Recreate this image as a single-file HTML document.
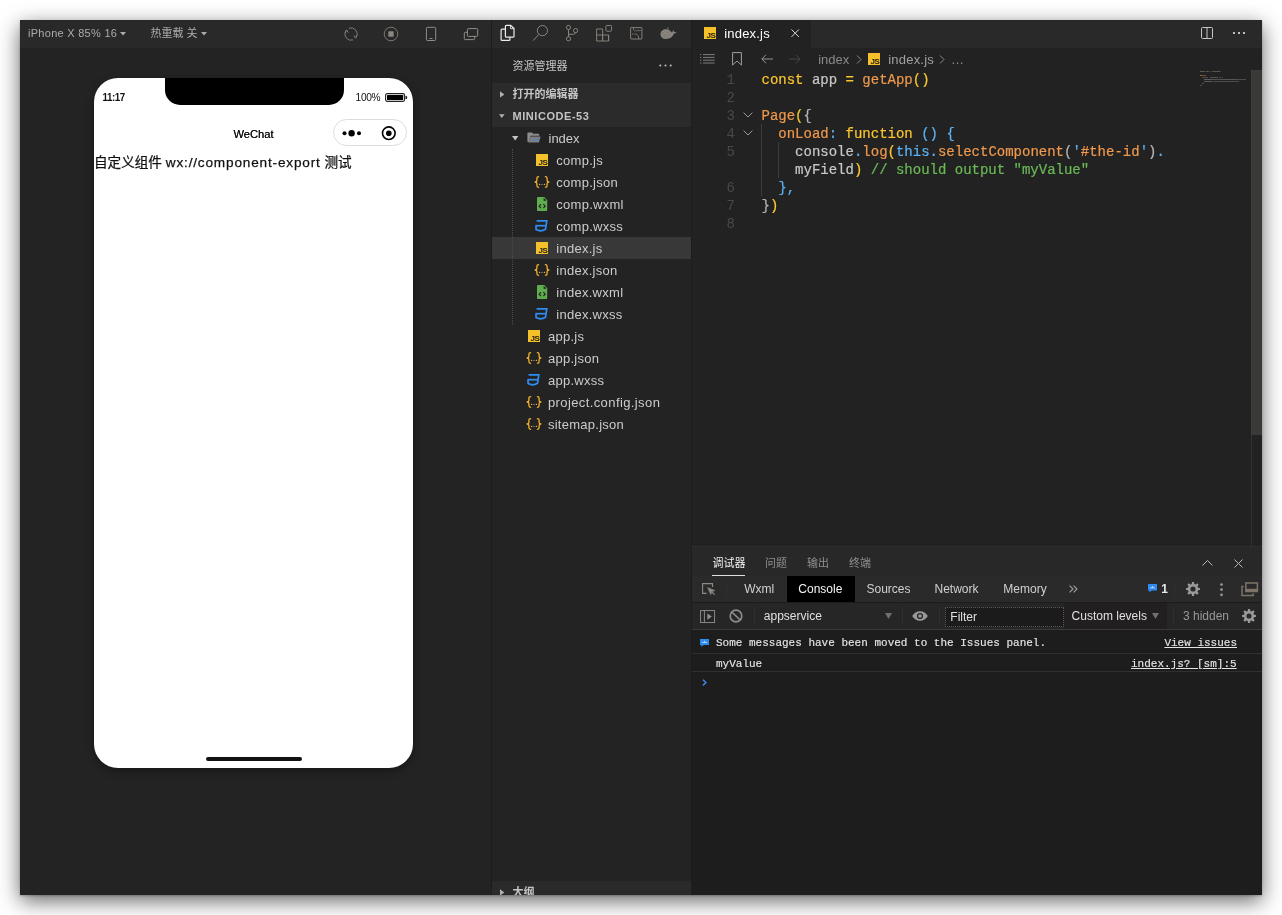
<!DOCTYPE html>
<html lang="zh">
<head>
<meta charset="utf-8">
<title>index.js</title>
<style>
html,body{margin:0;padding:0;background:#fff;}
body{width:1282px;height:915px;position:relative;overflow:hidden;font-family:"Liberation Sans","Noto Sans CJK SC",sans-serif;}
#win{position:absolute;left:20px;top:20px;width:1242px;height:875px;background:#232323;overflow:hidden;}
#shadow{position:absolute;left:20px;top:20px;width:1242px;height:875px;box-shadow:0 6px 20px rgba(0,0,0,.6),0 1px 2px rgba(0,0,0,.22);}
#pg{will-change:transform;position:absolute;left:-20px;top:-20px;width:1282px;height:915px;}
.a{position:absolute;}
.t{position:absolute;white-space:nowrap;line-height:1;}
svg{position:absolute;overflow:visible;}
/* simulator */
#simbar{left:20px;top:20px;width:471px;height:28px;background:#292929;}
#simbody{left:20px;top:48px;width:471px;height:847px;background:#232323;}
#phone{left:94px;top:78px;width:319px;height:690px;background:#fff;border-radius:24px;box-shadow:0 3px 8px rgba(0,0,0,.35);overflow:hidden;}
#notch{left:164.5px;top:78px;width:179px;height:27px;background:#000;border-radius:0 0 15px 15px;}
/* sidebar */
#divider{left:491px;top:20px;width:1px;height:875px;background:#1d1d1d;}
#actbar{left:492px;top:20px;width:199px;height:28px;background:#292929;}
#side{left:492px;top:48px;width:199px;height:847px;background:#232323;}
.sec{left:492px;width:199px;height:22px;background:#2b2b2b;}
.row{left:492px;width:199px;height:22px;}
.fn{font-size:13px;color:#cccccc;}
/* editor */
#divider2{left:691px;top:20px;width:1px;height:875px;background:#1d1d1d;}
#tabbar{left:692px;top:20px;width:570px;height:28px;background:#292929;}
#tab{left:692px;top:20px;width:119px;height:28px;background:#222222;}
#editor{left:692px;top:48px;width:570px;height:498px;background:#222222;}
.code{-webkit-text-stroke:.2px currentColor;font-family:"Liberation Mono",monospace;font-size:14px;left:761.5px;height:18px;line-height:18px;white-space:pre;position:absolute;color:#c8c8c8;}
.ln{font-family:"Liberation Mono",monospace;font-size:14px;height:18px;line-height:18px;position:absolute;left:701px;width:34px;text-align:right;color:#484848;}
.y{color:#fbc72c}.o{color:#f0994c}.b{color:#5db1f2}.g{color:#b4b4b4}.gr{color:#6abb55}
/* panel */
#panelhead{left:692px;top:546px;width:570px;height:30px;background:#282828;border-top:1px dotted #343434;box-sizing:border-box;}
#dtabs{left:692px;top:576px;width:570px;height:26px;background:#2a2a2a;}
#ctool{left:692px;top:602px;width:570px;height:28px;background:#262626;border-top:1px solid #1c1c1c;border-bottom:1px solid #3a3a3a;box-sizing:border-box;}
#console{left:692px;top:630px;width:570px;height:265px;background:#1d1d1d;}
.dt{font-size:12px;color:#d0d0d0;}
.cm{font-family:"Liberation Mono",monospace;font-size:11px;color:#e4e4e4;-webkit-text-stroke:.15px #e4e4e4;}
</style>
</head>
<body>
<div id="shadow"></div>
<div id="win"><div id="pg">

<!-- ============ SIMULATOR ============ -->
<div class="a" id="simbar"></div>
<div class="a" id="simbody"></div>
<div class="t" style="left:28px;top:27.5px;font-size:11px;letter-spacing:.28px;color:#ababab;">iPhone X 85% 16</div>
<svg style="left:120px;top:31.7px" width="6" height="3.5" viewBox="0 0 7 4"><path d="M0 0h7L3.5 4z" fill="#ababab"/></svg>
<div class="t" style="left:150.5px;top:27.5px;font-size:11px;color:#ababab;">热重载 关</div>
<svg style="left:201.4px;top:31.7px" width="6" height="3.5" viewBox="0 0 7 4"><path d="M0 0h7L3.5 4z" fill="#ababab"/></svg>
<!-- refresh -->
<svg style="left:341px;top:24px" width="20" height="20" viewBox="0 0 20 20" fill="none" stroke="#8a857c" stroke-width=".9"><path d="M7.9 4.2A6.2 6.2 0 0 1 15.2 13.4"/><path d="M13 11.5l1.5 2.7 1.5-3"/><path d="M12.2 15.9A6.2 6.2 0 0 1 4.9 6.7"/><path d="M7.1 8.6L5.6 5.9 4.1 8.9"/></svg>
<!-- stop -->
<svg style="left:383px;top:25.7px" width="16" height="16" viewBox="0 0 16 16"><circle cx="8" cy="8" r="6.8" fill="none" stroke="#857f75" stroke-width=".9"/><rect x="5.3" y="5.3" width="5.4" height="5.4" rx=".7" fill="#8a8680"/></svg>
<!-- phone -->
<svg style="left:423px;top:26px" width="16" height="16" viewBox="0 0 16 16" fill="none" stroke="#9a9894" stroke-width=".9"><rect x="3.4" y="1.3" width="9.3" height="13.2" rx="1.3"/><path d="M6.5 12.5h3"/></svg>
<!-- windows -->
<svg style="left:463px;top:26px" width="16" height="16" viewBox="0 0 16 16" fill="none" stroke="#9a9894" stroke-width=".9"><rect x="4.4" y="2.6" width="10.3" height="7.8" rx="1"/><path d="M4.4 6.3H2.3a1 1 0 0 0-1 1v5.3a1 1 0 0 0 1 1h8.4a1 1 0 0 0 1-1v-2.2"/></svg>

<div class="a" id="phone"></div>
<div class="a" id="notch"></div>
<div class="t" style="left:102.5px;top:92.5px;font-size:9.8px;font-weight:bold;letter-spacing:-.45px;color:#111;transform:scaleY(1.17);transform-origin:50% 85%;">11:17</div>
<div class="t" style="left:355.6px;top:92.6px;font-size:10.2px;letter-spacing:-.38px;color:#111;">100%</div>
<svg style="left:384.5px;top:93px" width="23" height="9" viewBox="0 0 23 9"><rect x=".6" y=".6" width="19" height="7.8" rx="1.6" fill="none" stroke="#222" stroke-width="1.1"/><rect x="2" y="2" width="16.2" height="5" rx=".6" fill="#000"/><path d="M20.5 2.9h.6a1.1 1.1 0 0 1 1.1 1.1v1a1.1 1.1 0 0 1-1.1 1.1h-.6z" fill="#222"/></svg>
<div class="t" style="left:94px;width:319px;text-align:center;top:128.8px;font-size:11.2px;color:#111;text-shadow:0 0 .2px #111;">WeChat</div>
<div class="a" style="left:333px;top:118.5px;width:74px;height:27px;border:1px solid #dcdcdc;border-radius:14px;box-sizing:border-box;"></div>
<svg style="left:333px;top:118.5px" width="74" height="27" viewBox="0 0 74 27"><circle cx="11.5" cy="14.2" r="2" fill="#000"/><circle cx="18.6" cy="14.2" r="3.2" fill="#000"/><circle cx="26" cy="14.2" r="2" fill="#000"/><circle cx="55.8" cy="14.2" r="6.3" fill="none" stroke="#000" stroke-width="1.6"/><circle cx="55.8" cy="14.2" r="2.8" fill="#000"/></svg>
<div class="t" id="bodytxt" style="left:94px;top:156px;font-size:13.6px;color:#111;-webkit-text-stroke:.25px #111;">自定义组件 <span style="letter-spacing:.83px">wx://component-export</span> 测试</div>
<div class="a" style="left:206px;top:756.5px;width:95.5px;height:4.4px;border-radius:2.2px;background:#111;"></div>


<!-- ============ SIDEBAR ============ -->
<div class="a" id="divider"></div>
<div class="a" id="actbar"></div>
<div class="a" id="side"></div>
<!-- files icon (active) -->
<svg style="left:498.8px;top:24.3px" width="16" height="18" viewBox="0 0 16 18" fill="none" stroke="#ececec" stroke-width="1.2" stroke-linejoin="round"><path d="M6.4 12.2V2.2a.9.9 0 0 1 .9-.9h4.5l3.2 3.2v7.7a.9.9 0 0 1-.9.9H7.3a.9.9 0 0 1-.9-.9z"/><path d="M11.6 1.5v3.2h3.2" stroke-width=".9"/><path d="M6.2 5.2H3a.9.9 0 0 0-.9.9v9.4a.9.9 0 0 0 .9.9h7a.9.9 0 0 0 .9-.9v-2.2"/></svg>
<!-- search -->
<svg style="left:532px;top:24px" width="18" height="18" viewBox="0 0 18 18" fill="none" stroke="#8a857c" stroke-width="1"><circle cx="10.4" cy="6.6" r="5.1"/><path d="M6.9 10.4L1.2 16.6"/></svg>
<!-- git -->
<svg style="left:564px;top:24px" width="16" height="18" viewBox="0 0 16 18" fill="none" stroke="#8a857c" stroke-width="1"><circle cx="4.5" cy="3.5" r="2.1"/><circle cx="4.5" cy="14.8" r="2.1"/><circle cx="11.6" cy="6.6" r="2.1"/><path d="M4.5 5.6v7.1M4.5 10.3h3.6c2.2 0 3.5-.6 3.5-1.6"/></svg>
<!-- extensions -->
<svg style="left:596px;top:24px" width="17" height="18" viewBox="0 0 17 18" fill="none" stroke="#8a857c" stroke-width=".95"><path d="M.6 5h6v12H.6zM.6 11h12v6H6.6v-6" /><path d="M12.6 11v6"/><rect x="9.9" y="1.5" width="5.6" height="5.7" rx=".7"/></svg>
<!-- layout/terminal-like -->
<svg style="left:630px;top:26.8px" width="13" height="13" viewBox="0 0 13 13" fill="none" stroke="#8a857c" stroke-width=".95"><rect x=".6" y=".6" width="11.3" height="11.4" rx=".5"/><path d="M3.5.6v2.5l1 .9.9-.8.9.8.9-.8.9.8.9-.8.9.8.9-.8" stroke-width=".7"/><path d="M2 7h1M3.4 7h1M4.8 7h1.2l2.6 2v3" stroke-width=".8"/></svg>
<!-- docker whale -->
<svg style="left:659.5px;top:27px" width="17" height="13" viewBox="0 0 17 13"><path d="M.5 7.2C.5 4.2 2.8 2.2 6 2.2c2.7 0 4.7 1.3 5.8 3.4.6-.4 1-1.2 1-2.4 1 .6 1.4 1.2 1.6 2 .6-.3 1.3-.3 2 .1-.5.9-1.4 1.3-2.6 1.3C13 9.8 10 12 6.2 12 2.8 12 .5 10.2.5 7.2z" fill="#8a857c"/><path d="M7.8 2.4V.8M7.8.9h1" stroke="#8a857c" stroke-width=".8" fill="none"/><g fill="#5a564f"><circle cx="3" cy="6" r=".45"/><circle cx="5.2" cy="4.6" r=".45"/><circle cx="7.6" cy="5.8" r=".45"/><circle cx="4.4" cy="8" r=".45"/><circle cx="6.8" cy="8.6" r=".45"/><circle cx="9.4" cy="7.4" r=".45"/><circle cx="3" cy="9.6" r=".45"/><circle cx="8.8" cy="10" r=".45"/><circle cx="5.6" cy="10.4" r=".45"/><circle cx="9.6" cy="4.8" r=".45"/></g></svg>

<div class="t" style="left:512.5px;top:60.5px;font-size:11px;color:#c4c4c4;">资源管理器</div>
<svg style="left:659px;top:64px" width="13" height="3" viewBox="0 0 13 3" fill="#c4c4c4"><circle cx="1.3" cy="1.5" r="1"/><circle cx="6.5" cy="1.5" r="1"/><circle cx="11.7" cy="1.5" r="1"/></svg>
<div class="a sec" style="top:83px;"></div>
<div class="a sec" style="top:105px;"></div>
<svg style="left:500px;top:90.8px" width="4.4" height="6.8" viewBox="0 0 5 7"><path d="M0 0l5 3.5L0 7z" fill="#b0b0b0"/></svg>
<div class="t" style="left:512.5px;top:89px;font-size:11px;font-weight:bold;color:#c4c4c4;">打开的编辑器</div>
<svg style="left:499.4px;top:113.8px" width="5.6" height="4.2" viewBox="0 0 7 4.6"><path d="M0 0h7L3.5 4.6z" fill="#b0b0b0"/></svg>
<div class="t" style="left:512.5px;top:110.5px;font-size:11px;font-weight:bold;letter-spacing:.55px;color:#c4c4c4;">MINICODE-53</div>
<div class="a" style="left:492px;top:237px;width:199px;height:22px;background:#383838;"></div>
<div class="a" style="left:512px;top:149px;width:0;height:176px;border-left:1px dotted #4c4c4c;"></div>
<svg style="left:512px;top:135.8px" width="6.4" height="4.4" viewBox="0 0 6.4 4.4"><path d="M0 0h6.4L3.2 4.4z" fill="#c4c4c4"/></svg>
<svg style="left:527px;top:132.1px" width="14" height="11" viewBox="0 0 14 11"><path d="M.4 9.6V1.2a.8.8 0 0 1 .8-.8h3.8l1.2 1.4h5.2a.8.8 0 0 1 .8.8v1.2H3.4L1.6 10.2z" fill="#8e8e8e"/><path d="M3.2 4.4h10.4L12 10.4H1.4z" fill="#7f7f7f"/><g fill="#2f8cf3"><circle cx="8.4" cy="6.4" r=".7"/><circle cx="11.4" cy="6.4" r=".7"/><circle cx="4.4" cy="8.6" r=".7"/><circle cx="7.4" cy="8.6" r=".7"/><circle cx="10.4" cy="8.6" r=".7"/></g></svg>
<div class="t fn" style="left:548.5px;top:132px;letter-spacing:0;">index</div>
<svg style="left:536px;top:154px" width="12" height="12" viewBox="0 0 12 12"><rect width="12" height="12" fill="#f4c12b"/><text x="11.4" y="10.8" text-anchor="end" font-family="Liberation Sans, sans-serif" font-weight="bold" font-size="8" fill="#2a2110" letter-spacing="-.4">JS</text></svg>
<div class="t fn" style="left:556.3px;top:154px;letter-spacing:.27px;">comp.js</div>
<svg style="left:534px;top:175.8px" width="16" height="12" viewBox="0 0 16 12" fill="none" stroke="#f3b32d" stroke-width="1.3" stroke-linecap="round" stroke-linejoin="round"><path d="M4.6.7C3.2.7 2.9 1.3 2.9 2.4v2c0 .9-.6 1.4-1.8 1.6C2.3 6.2 2.9 6.7 2.9 7.6v2c0 1.1.3 1.7 1.7 1.7"/><path d="M11.4.7c1.4 0 1.7.6 1.7 1.7v2c0 .9.6 1.4 1.8 1.6-1.2.2-1.8.7-1.8 1.6v2c0 1.1-.3 1.7-1.7 1.7"/><g stroke="none"><circle cx="5.6" cy="8.4" r=".7" fill="#f3b32d"/><circle cx="8" cy="8.4" r=".7" fill="#8c8c8c"/><circle cx="10.4" cy="8.4" r=".7" fill="#f3b32d"/></g></svg>
<div class="t fn" style="left:556.3px;top:176px;letter-spacing:.27px;">comp.json</div>
<svg style="left:537px;top:197px" width="11" height="14" viewBox="0 0 11 14"><path d="M1 0h6.2L10.2 3.2V13a1 1 0 0 1-1 1H1a1 1 0 0 1-1-1V1a1 1 0 0 1 1-1z" fill="#5fae4e"/><path d="M6.6.8v3h3z" fill="#232323"/><path d="M4 7.2L2.2 9.2 4 11.2M6.4 7.2l1.8 2-1.8 2" fill="none" stroke="#232323" stroke-width="1.2"/></svg>
<div class="t fn" style="left:556.3px;top:198px;letter-spacing:.27px;">comp.wxml</div>
<svg style="left:535.4px;top:220px" width="13" height="12" viewBox="0 0 13 12" fill="none" stroke="#2f8cf3" stroke-width="1.7"><path d="M1.6 .9h10.2l-1.3 8.3Q6 12.2 1.1 9.6L1 6"/><path d="M.4 5.7h10.4"/></svg>
<div class="t fn" style="left:556.3px;top:220px;letter-spacing:.27px;">comp.wxss</div>
<svg style="left:536px;top:242px" width="12" height="12" viewBox="0 0 12 12"><rect width="12" height="12" fill="#f4c12b"/><text x="11.4" y="10.8" text-anchor="end" font-family="Liberation Sans, sans-serif" font-weight="bold" font-size="8" fill="#2a2110" letter-spacing="-.4">JS</text></svg>
<div class="t fn" style="left:556.3px;top:242px;letter-spacing:.27px;">index.js</div>
<svg style="left:534px;top:263.8px" width="16" height="12" viewBox="0 0 16 12" fill="none" stroke="#f3b32d" stroke-width="1.3" stroke-linecap="round" stroke-linejoin="round"><path d="M4.6.7C3.2.7 2.9 1.3 2.9 2.4v2c0 .9-.6 1.4-1.8 1.6C2.3 6.2 2.9 6.7 2.9 7.6v2c0 1.1.3 1.7 1.7 1.7"/><path d="M11.4.7c1.4 0 1.7.6 1.7 1.7v2c0 .9.6 1.4 1.8 1.6-1.2.2-1.8.7-1.8 1.6v2c0 1.1-.3 1.7-1.7 1.7"/><g stroke="none"><circle cx="5.6" cy="8.4" r=".7" fill="#f3b32d"/><circle cx="8" cy="8.4" r=".7" fill="#8c8c8c"/><circle cx="10.4" cy="8.4" r=".7" fill="#f3b32d"/></g></svg>
<div class="t fn" style="left:556.3px;top:264px;letter-spacing:.27px;">index.json</div>
<svg style="left:537px;top:285px" width="11" height="14" viewBox="0 0 11 14"><path d="M1 0h6.2L10.2 3.2V13a1 1 0 0 1-1 1H1a1 1 0 0 1-1-1V1a1 1 0 0 1 1-1z" fill="#5fae4e"/><path d="M6.6.8v3h3z" fill="#232323"/><path d="M4 7.2L2.2 9.2 4 11.2M6.4 7.2l1.8 2-1.8 2" fill="none" stroke="#232323" stroke-width="1.2"/></svg>
<div class="t fn" style="left:556.3px;top:286px;letter-spacing:.27px;">index.wxml</div>
<svg style="left:535.4px;top:308px" width="13" height="12" viewBox="0 0 13 12" fill="none" stroke="#2f8cf3" stroke-width="1.7"><path d="M1.6 .9h10.2l-1.3 8.3Q6 12.2 1.1 9.6L1 6"/><path d="M.4 5.7h10.4"/></svg>
<div class="t fn" style="left:556.3px;top:308px;letter-spacing:.27px;">index.wxss</div>
<svg style="left:528px;top:330px" width="12" height="12" viewBox="0 0 12 12"><rect width="12" height="12" fill="#f4c12b"/><text x="11.4" y="10.8" text-anchor="end" font-family="Liberation Sans, sans-serif" font-weight="bold" font-size="8" fill="#2a2110" letter-spacing="-.4">JS</text></svg>
<div class="t fn" style="left:547.9px;top:330px;letter-spacing:.27px;">app.js</div>
<svg style="left:526px;top:351.8px" width="16" height="12" viewBox="0 0 16 12" fill="none" stroke="#f3b32d" stroke-width="1.3" stroke-linecap="round" stroke-linejoin="round"><path d="M4.6.7C3.2.7 2.9 1.3 2.9 2.4v2c0 .9-.6 1.4-1.8 1.6C2.3 6.2 2.9 6.7 2.9 7.6v2c0 1.1.3 1.7 1.7 1.7"/><path d="M11.4.7c1.4 0 1.7.6 1.7 1.7v2c0 .9.6 1.4 1.8 1.6-1.2.2-1.8.7-1.8 1.6v2c0 1.1-.3 1.7-1.7 1.7"/><g stroke="none"><circle cx="5.6" cy="8.4" r=".7" fill="#f3b32d"/><circle cx="8" cy="8.4" r=".7" fill="#8c8c8c"/><circle cx="10.4" cy="8.4" r=".7" fill="#f3b32d"/></g></svg>
<div class="t fn" style="left:547.9px;top:352px;letter-spacing:.27px;">app.json</div>
<svg style="left:527.4px;top:374px" width="13" height="12" viewBox="0 0 13 12" fill="none" stroke="#2f8cf3" stroke-width="1.7"><path d="M1.6 .9h10.2l-1.3 8.3Q6 12.2 1.1 9.6L1 6"/><path d="M.4 5.7h10.4"/></svg>
<div class="t fn" style="left:547.9px;top:374px;letter-spacing:.27px;">app.wxss</div>
<svg style="left:526px;top:395.8px" width="16" height="12" viewBox="0 0 16 12" fill="none" stroke="#f3b32d" stroke-width="1.3" stroke-linecap="round" stroke-linejoin="round"><path d="M4.6.7C3.2.7 2.9 1.3 2.9 2.4v2c0 .9-.6 1.4-1.8 1.6C2.3 6.2 2.9 6.7 2.9 7.6v2c0 1.1.3 1.7 1.7 1.7"/><path d="M11.4.7c1.4 0 1.7.6 1.7 1.7v2c0 .9.6 1.4 1.8 1.6-1.2.2-1.8.7-1.8 1.6v2c0 1.1-.3 1.7-1.7 1.7"/><g stroke="none"><circle cx="5.6" cy="8.4" r=".7" fill="#f3b32d"/><circle cx="8" cy="8.4" r=".7" fill="#8c8c8c"/><circle cx="10.4" cy="8.4" r=".7" fill="#f3b32d"/></g></svg>
<div class="t fn" style="left:547.9px;top:396px;letter-spacing:.4px;">project.config.json</div>
<svg style="left:526px;top:417.8px" width="16" height="12" viewBox="0 0 16 12" fill="none" stroke="#f3b32d" stroke-width="1.3" stroke-linecap="round" stroke-linejoin="round"><path d="M4.6.7C3.2.7 2.9 1.3 2.9 2.4v2c0 .9-.6 1.4-1.8 1.6C2.3 6.2 2.9 6.7 2.9 7.6v2c0 1.1.3 1.7 1.7 1.7"/><path d="M11.4.7c1.4 0 1.7.6 1.7 1.7v2c0 .9.6 1.4 1.8 1.6-1.2.2-1.8.7-1.8 1.6v2c0 1.1-.3 1.7-1.7 1.7"/><g stroke="none"><circle cx="5.6" cy="8.4" r=".7" fill="#f3b32d"/><circle cx="8" cy="8.4" r=".7" fill="#8c8c8c"/><circle cx="10.4" cy="8.4" r=".7" fill="#f3b32d"/></g></svg>
<div class="t fn" style="left:547.9px;top:418px;letter-spacing:.27px;">sitemap.json</div>
<div class="a sec" style="top:881px;background:#2a2a2a;"></div>
<svg style="left:500px;top:888.5px" width="4.4" height="6.8" viewBox="0 0 5 7"><path d="M0 0l5 3.5L0 7z" fill="#b0b0b0"/></svg>
<div class="t" style="left:512.5px;top:886.5px;font-size:11px;font-weight:bold;color:#c4c4c4;">大纲</div>


<!-- ============ EDITOR ============ -->
<div class="a" id="divider2"></div>
<div class="a" id="tabbar"></div>
<div class="a" id="tab"></div>
<div class="a" id="editor"></div>
<!-- tab -->
<svg style="left:704px;top:27px" width="12" height="12" viewBox="0 0 12 12"><rect width="12" height="12" fill="#f4c12b"/><text x="11.4" y="10.8" text-anchor="end" font-family="Liberation Sans, sans-serif" font-weight="bold" font-size="8" fill="#2a2110" letter-spacing="-.4">JS</text></svg>
<div class="t" style="left:724.3px;top:27px;font-size:13px;letter-spacing:.18px;color:#ffffff;">index.js</div>
<svg style="left:791px;top:29px" width="8.4" height="8.4" viewBox="0 0 9 9" stroke="#dcdcdc" stroke-width="1.05" fill="none"><path d="M.5.5l8 8M8.5.5l-8 8"/></svg>
<!-- right actions -->
<svg style="left:1201px;top:27px" width="12" height="12" viewBox="0 0 12 12" fill="none" stroke="#c8c8c8" stroke-width="1"><rect x=".5" y=".5" width="11" height="11" rx="1"/><path d="M6 .5v11"/></svg>
<svg style="left:1233px;top:32px" width="13" height="2" viewBox="0 0 13 2" fill="#c0c0c0"><rect x="0" y="0" width="2" height="2"/><rect x="5" y="0" width="2" height="2"/><rect x="10" y="0" width="2" height="2"/></svg>
<!-- breadcrumb row -->
<svg style="left:700px;top:54.1px" width="15" height="10" viewBox="0 0 15 10" stroke="#8e8e8e" stroke-width=".85" fill="none"><path d="M0 .6h1.4M3 .6h11.6M0 3.4h1.4M3 3.4h11.6M0 6.2h1.4M3 6.2h11.6M0 9h1.4M3 9h11.6"/></svg>
<svg style="left:732px;top:52px" width="10" height="14" viewBox="0 0 10 14" stroke="#a0a0a0" stroke-width="1" fill="none"><path d="M.6.6h8.8v12.4L5 9 .6 13z"/></svg>
<svg style="left:761px;top:54px" width="12" height="10" viewBox="0 0 12 10" stroke="#9a9a9a" stroke-width=".95" fill="none"><path d="M12 5H1M5 .8L.8 5 5 9.2"/></svg>
<svg style="left:789px;top:54px" width="12" height="10" viewBox="0 0 12 10" stroke="#484848" stroke-width=".95" fill="none"><path d="M0 5h11M7 .8L11.2 5 7 9.2"/></svg>
<div class="t" style="left:818.2px;top:52.5px;font-size:13px;color:#8a8a8a;">index</div>
<svg style="left:856px;top:55px" width="6" height="9" viewBox="0 0 6 9" stroke="#8a8a8a" stroke-width="1" fill="none"><path d="M1 .5l4 4-4 4"/></svg>
<svg style="left:868px;top:53px" width="12" height="12" viewBox="0 0 12 12"><rect width="12" height="12" fill="#f4c12b"/><text x="11.4" y="10.8" text-anchor="end" font-family="Liberation Sans, sans-serif" font-weight="bold" font-size="8" fill="#2a2110" letter-spacing="-.4">JS</text></svg>
<div class="t" style="left:888.2px;top:52.5px;font-size:13px;letter-spacing:.22px;color:#a0a0a0;">index.js</div>
<svg style="left:939px;top:55px" width="6" height="9" viewBox="0 0 6 9" stroke="#8a8a8a" stroke-width="1" fill="none"><path d="M1 .5l4 4-4 4"/></svg>
<div class="t" style="left:951px;top:52.5px;font-size:13px;color:#8a8a8a;">…</div>

<div class="ln" style="top:71px">1</div>
<div class="ln" style="top:89px">2</div>
<div class="ln" style="top:107px">3</div>
<div class="ln" style="top:125px">4</div>
<div class="ln" style="top:143px">5</div>
<div class="ln" style="top:179px">6</div>
<div class="ln" style="top:197px">7</div>
<div class="ln" style="top:215px">8</div>
<svg style="left:743px;top:112px" width="10" height="6" viewBox="0 0 10 6" stroke="#979797" stroke-width="1" fill="none"><path d="M.6.6L5 5l4.4-4.4"/></svg>
<svg style="left:743px;top:130px" width="10" height="6" viewBox="0 0 10 6" stroke="#979797" stroke-width="1" fill="none"><path d="M.6.6L5 5l4.4-4.4"/></svg>
<div class="a" style="left:761px;top:124px;width:1px;height:72px;background:#3c3c3c;"></div>
<div class="a" style="left:778px;top:142px;width:1px;height:36px;background:#3c3c3c;"></div>
<div class="code" style="top:71px"><span class="y">const</span> app <span class="y">=</span> <span class="o">getApp</span><span class="y">()</span></div>
<div class="code" style="top:107px"><span class="o">Page</span><span class="y">(</span><span class="g">{</span></div>
<div class="code" style="top:125px">  <span class="o">onLoad</span><span class="b">:</span> <span class="y">function</span> <span class="b">()</span> <span class="b">{</span></div>
<div class="code" style="top:143px">    console<span class="b">.</span><span class="o">log</span><span class="y">(</span><span class="b">this.</span><span class="o">selectComponent</span><span class="g">(</span><span class="b">'</span><span class="o">#the-id</span><span class="b">'</span><span class="g">)</span><span class="b">.</span></div>
<div class="code" style="top:161px">    myField<span class="y">)</span> <span class="gr">// should output "myValue"</span></div>
<div class="code" style="top:179px">  <span class="b">},</span></div>
<div class="code" style="top:197px"><span class="g">}</span><span class="y">)</span></div>
<!-- minimap -->
<svg style="left:1200px;top:70px;opacity:.75" width="48" height="18" viewBox="0 0 48 18">
<rect x="0" y="1" width="5" height="1" fill="#6e6a5c"/><rect x="6" y="1" width="3" height="1" fill="#6a6a6a"/><rect x="10.5" y="1" width="1" height="1" fill="#6e6a5c"/><rect x="12.5" y="1" width="8" height="1" fill="#6e655a"/>
<rect x="0" y="5" width="2" height="1" fill="#c47a30"/><rect x="2" y="5" width="4" height="1" fill="#6a6560"/>
<rect x="2" y="7" width="6" height="1" fill="#5e5a54"/><rect x="10" y="7" width="8" height="1" fill="#66625a"/><rect x="19" y="7" width="2" height="1" fill="#4a5a6a"/><rect x="22" y="7" width="1" height="1" fill="#4a5a6a"/>
<rect x="4" y="9" width="7" height="1" fill="#707070"/><rect x="11" y="9" width="4" height="1" fill="#6a625a"/><rect x="15" y="9" width="5" height="1" fill="#55606c"/><rect x="20" y="9" width="15" height="1" fill="#6e665c"/><rect x="35" y="9" width="11" height="1" fill="#5e5a54"/>
<rect x="4" y="11" width="8" height="1" fill="#707070"/><rect x="13" y="11" width="26" height="1" fill="#565e52"/>
<rect x="2" y="13" width="2" height="1" fill="#55606c"/>
<rect x="0" y="15" width="2" height="1" fill="#5a5a5a"/>
</svg>
<!-- scrollbar -->
<div class="a" style="left:1251px;top:70px;width:11px;height:365px;background:#3a3a38;"></div>
<div class="a" style="left:1251px;top:70px;width:0;height:476px;border-left:1px dotted #3e3e3e;"></div>


<!-- ============ PANEL ============ -->
<div class="a" id="panelhead"></div>
<div class="a" id="dtabs"></div>
<div class="a" id="ctool"></div>
<div class="a" id="console"></div>
<!-- panel header tabs -->
<div class="t" style="left:712.5px;top:557.8px;font-size:11px;color:#f0f0f0;">调试器</div>
<div class="a" style="left:712px;top:574.5px;width:32.6px;height:1px;background:#e0e0e0;"></div>
<div class="t" style="left:765px;top:557.8px;font-size:11px;color:#8e8e8e;">问题</div>
<div class="t" style="left:807px;top:557.8px;font-size:11px;color:#8e8e8e;">输出</div>
<div class="t" style="left:849px;top:557.8px;font-size:11px;color:#8e8e8e;">终端</div>
<svg style="left:1201.5px;top:559.8px" width="11" height="6" viewBox="0 0 11 6" stroke="#b8b8b8" stroke-width="1" fill="none"><path d="M.5 5.5l5-5 5 5"/></svg>
<svg style="left:1234.3px;top:558.8px" width="9" height="9" viewBox="0 0 9 9" stroke="#b8b8b8" stroke-width="1" fill="none"><path d="M.5.5l8 8M8.5.5l-8 8"/></svg>
<!-- devtools tabs -->
<svg style="left:702px;top:583px" width="14" height="13" viewBox="0 0 14 13" fill="none" stroke="#8e8a84" stroke-width="1.1"><path d="M10.5 4V.6H.6v9.8h4"/><path d="M5.6 4.6l7.2 3-3 1 -1 3z" fill="#8e8a84" stroke-width=".6"/><path d="M9.6 8.6l3 3" stroke-width="1.3"/></svg>
<div class="a" style="left:726px;top:581px;width:1px;height:16px;background:#2f2f2f;"></div>
<div class="t dt" style="left:744.3px;top:583px;">Wxml</div>
<div class="a" style="left:787px;top:576px;width:68px;height:26px;background:#000;"></div>
<div class="t dt" style="left:798.3px;top:583px;color:#f4f4f4;">Console</div>
<div class="t dt" style="left:866.5px;top:583px;">Sources</div>
<div class="t dt" style="left:934.5px;top:583px;">Network</div>
<div class="t dt" style="left:1003.3px;top:583px;">Memory</div>
<svg style="left:1068.5px;top:584.5px" width="9" height="8" viewBox="0 0 9 8" stroke="#a0a0a0" stroke-width="1.1" fill="none"><path d="M.6.6L4 4 .6 7.4M4.6.6L8 4 4.6 7.4"/></svg>
<svg style="left:1148px;top:584px" width="9" height="9" viewBox="0 0 9 9"><path d="M0 0h9v6.4H3.8L1.4 8.6V6.4H0z" fill="#2d8af0"/><path d="M2 3.8h5M4.5 2v2" stroke="#bcd9fa" stroke-width=".9"/></svg>
<div class="t dt" style="left:1161.3px;top:583px;color:#e8e8e8;font-weight:bold;">1</div>
<div class="a" style="left:1174px;top:581px;width:1px;height:16px;background:#2f2f2f;"></div>
<svg style="left:1185.6px;top:582px" width="14" height="14" viewBox="0 0 14 14"><path d="M5.96 0.08L8.04 0.08L8.25 1.97L9.67 2.56L11.16 1.37L12.63 2.84L11.44 4.33L12.03 5.75L13.92 5.96L13.92 8.04L12.03 8.25L11.44 9.67L12.63 11.16L11.16 12.63L9.67 11.44L8.25 12.03L8.04 13.92L5.96 13.92L5.75 12.03L4.33 11.44L2.84 12.63L1.37 11.16L2.56 9.67L1.97 8.25L0.08 8.04L0.08 5.96L1.97 5.75L2.56 4.33L1.37 2.84L2.84 1.37L4.33 2.56L5.75 1.97z" fill="#9a9a9a"/><circle cx="7" cy="7" r="2.6" fill="#2a2a2a"/></svg>
<svg style="left:1219.9px;top:583.2px" width="3" height="13" viewBox="0 0 3 13" fill="#9a9a9a"><circle cx="1.5" cy="1.5" r="1.35"/><circle cx="1.5" cy="6.6" r="1.35"/><circle cx="1.5" cy="11.8" r="1.35"/></svg>
<svg style="left:1241px;top:582px" width="18" height="15" viewBox="0 0 18 15" fill="none" stroke="#7d7468" stroke-width="1.5"><path d="M4.8 1h11.6v8.4H4.8z"/><path d="M4.8 8h11.6" stroke-width="2.4"/><path d="M2.6 4.4H1v9h11.2v-1.8"/></svg>
<!-- console toolbar -->
<svg style="left:700px;top:610px" width="16" height="13" viewBox="0 0 16 13" fill="none" stroke="#939393" stroke-width=".9"><rect x=".6" y=".6" width="14" height="12"/><path d="M4.4.6v12"/><path d="M7.4 3.4l4.4 3.2-4.4 3.2z" fill="#939393" stroke="none"/></svg>
<svg style="left:729.1px;top:609.2px" width="14" height="14" viewBox="0 0 14 14" fill="none" stroke="#8c8c8c" stroke-width="1.7"><circle cx="7" cy="7" r="5.8"/><path d="M2.8 3l8.4 8"/></svg>
<div class="a" style="left:754px;top:607px;width:1px;height:18px;background:#2f2f2f;"></div>
<div class="t dt" style="left:763.8px;top:610px;color:#e0e0e0;">appservice</div>
<svg style="left:885px;top:612.6px" width="7" height="6" viewBox="0 0 7 6"><path d="M0 0h7L3.5 6z" fill="#707070"/></svg>
<div class="a" style="left:902px;top:607px;width:1px;height:18px;background:#2f2f2f;"></div>
<svg style="left:912px;top:610.9px" width="16" height="10" viewBox="0 0 16 10"><path d="M.2 5C2 1.8 4.8.2 8 .2s6 1.6 7.8 4.8C14 8.2 11.2 9.8 8 9.8S2 8.2.2 5z" fill="#9a9a9a"/><circle cx="8" cy="5" r="3.1" fill="#262626"/><circle cx="8" cy="5" r="1.8" fill="#9a9a9a"/></svg>
<div class="a" style="left:939px;top:607px;width:1px;height:18px;background:#2f2f2f;"></div>
<div class="a" style="left:945px;top:606.5px;width:119px;height:20.5px;border:1px dotted #5a5a52;background:#1b1b1b;box-sizing:border-box;"></div>
<div class="t dt" style="left:950.3px;top:610.7px;color:#e0e0e0;">Filter</div>
<div class="a" style="left:1064px;top:603px;width:103px;height:26px;background:#211f1f;"></div>
<div class="t dt" style="left:1071.6px;top:610px;color:#e0e0e0;">Custom levels</div>
<svg style="left:1152px;top:612.8px" width="7" height="6" viewBox="0 0 7 6"><path d="M0 0h7L3.5 6z" fill="#707070"/></svg>
<div class="a" style="left:1173px;top:607px;width:1px;height:18px;background:#2f2f2f;"></div>
<div class="t dt" style="left:1183px;top:610px;color:#989898;">3 hidden</div>
<svg style="left:1242px;top:609px" width="14" height="14" viewBox="0 0 14 14"><path d="M5.96 0.08L8.04 0.08L8.25 1.97L9.67 2.56L11.16 1.37L12.63 2.84L11.44 4.33L12.03 5.75L13.92 5.96L13.92 8.04L12.03 8.25L11.44 9.67L12.63 11.16L11.16 12.63L9.67 11.44L8.25 12.03L8.04 13.92L5.96 13.92L5.75 12.03L4.33 11.44L2.84 12.63L1.37 11.16L2.56 9.67L1.97 8.25L0.08 8.04L0.08 5.96L1.97 5.75L2.56 4.33L1.37 2.84L2.84 1.37L4.33 2.56L5.75 1.97z" fill="#9a9a9a"/><circle cx="7" cy="7" r="2.6" fill="#2a2a2a"/></svg>
<!-- console messages -->
<div class="a" style="left:692px;top:653px;width:570px;height:1px;background:#303030;"></div>
<div class="a" style="left:692px;top:671px;width:570px;height:1px;background:#303030;"></div>
<svg style="left:700px;top:638.5px" width="9" height="8" viewBox="0 0 9 8"><path d="M0 0h9v6H3.6L1.4 8V6H0z" fill="#2d8af0"/><path d="M2 3.4h5M4.5 1.8v1.6" stroke="#bcd9fa" stroke-width=".9"/></svg>
<div class="t cm" style="left:716px;top:638px;">Some messages have been moved to the Issues panel.</div>
<div class="t cm" style="left:1164.4px;top:638px;text-decoration:underline;">View issues</div>
<div class="t cm" style="left:716px;top:659px;">myValue</div>
<div class="t cm" style="left:1131px;top:659px;text-decoration:underline;">index.js? [sm]:5</div>
<svg style="left:701.6px;top:678.6px" width="5" height="7.2" viewBox="0 0 6 9" stroke="#3b8cf5" stroke-width="1.7" fill="none"><path d="M1 .8l3.8 3.7L1 8.2"/></svg>


</div></div>
</body>
</html>
